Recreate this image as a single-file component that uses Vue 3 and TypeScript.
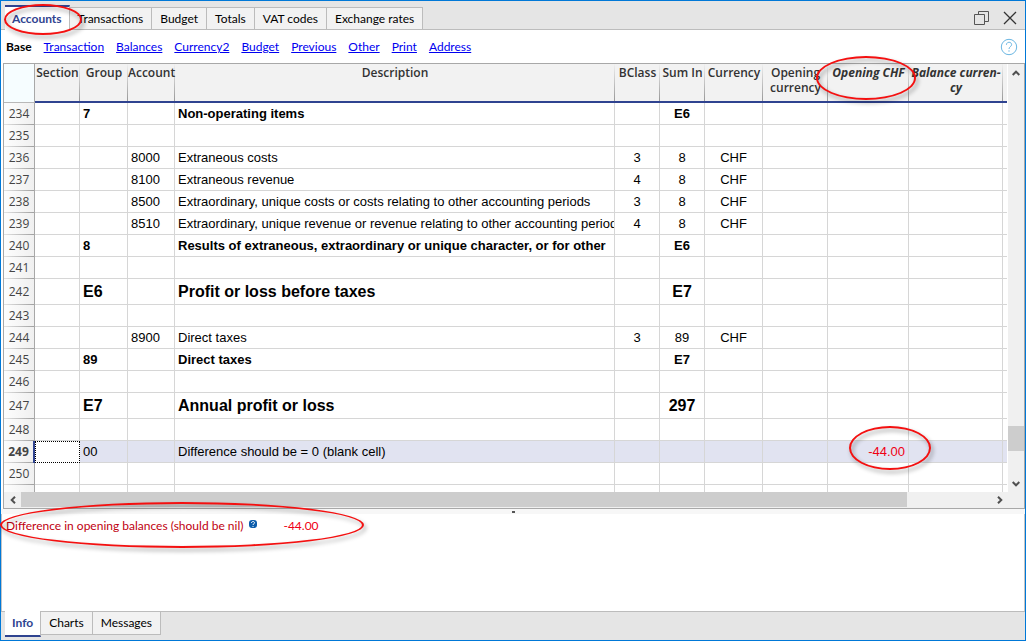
<script setup lang="ts">
import { ref } from 'vue'

interface Row {
  no?: number
  kind?: 'strong' | 'title' | 'selected'
  group?: string
  account?: string
  text?: string
  bclass?: string
  sumIn?: string
  currency?: string
  opening?: string
}

const tabs = ['Accounts', 'Transactions', 'Budget', 'Totals', 'VAT codes', 'Exchange rates']
const views = ['Transaction', 'Balances', 'Currency2', 'Budget', 'Previous', 'Other', 'Print', 'Address']
const infoTabs = ['Info', 'Charts', 'Messages']
const activeTab = ref('Accounts')
const activeInfo = ref('Info')

const rows: Row[] = [
  { no: 234, kind: 'strong', group: '7', text: 'Non-operating items', sumIn: 'E6' },
  { no: 235 },
  { no: 236, account: '8000', text: 'Extraneous costs', bclass: '3', sumIn: '8', currency: 'CHF' },
  { no: 237, account: '8100', text: 'Extraneous revenue', bclass: '4', sumIn: '8', currency: 'CHF' },
  { no: 238, account: '8500', text: 'Extraordinary, unique costs or costs relating to other accounting periods', bclass: '3', sumIn: '8', currency: 'CHF' },
  { no: 239, account: '8510', text: 'Extraordinary, unique revenue or revenue relating to other accounting periods', bclass: '4', sumIn: '8', currency: 'CHF' },
  { no: 240, kind: 'strong', group: '8', text: 'Results of extraneous, extraordinary or unique character, or for other', sumIn: 'E6' },
  { no: 241 },
  { no: 242, kind: 'title', group: 'E6', text: 'Profit or loss before taxes', sumIn: 'E7' },
  { no: 243 },
  { no: 244, account: '8900', text: 'Direct taxes', bclass: '3', sumIn: '89', currency: 'CHF' },
  { no: 245, kind: 'strong', group: '89', text: 'Direct taxes', sumIn: 'E7' },
  { no: 246 },
  { no: 247, kind: 'title', group: 'E7', text: 'Annual profit or loss', sumIn: '297' },
  { no: 248 },
  { no: 249, kind: 'selected', group: '00', text: 'Difference should be = 0 (blank cell)', opening: '-44.00' },
  { no: 250 },
  {},
]
</script>

<template>
  <main class="window">
    <header class="titlebar">
      <nav class="tabs">
        <button v-for="t in tabs" :key="t" type="button" class="tab" :class="{ active: t === activeTab }" @click="activeTab = t">{{ t }}</button>
      </nav>
      <div class="controls">
        <button type="button" class="icon" aria-label="Restore">
          <svg width="16" height="16" viewBox="0 0 16 16" fill="none" stroke="#555"><path d="M4.500 4V1.500H14.500V11.500H11M.5 4.500H10.500V14.500H.5Z" /></svg>
        </button>
        <button type="button" class="icon" aria-label="Close">
          <svg width="14" height="14" viewBox="0 0 14 14" fill="none" stroke="#333" stroke-width="1.300"><path d="M1 1L13 13M13 1L1 13" /></svg>
        </button>
      </div>
    </header>

    <nav class="views">
      <strong>Base</strong>
      <a v-for="v in views" :key="v" href="#">{{ v }}</a>
      <button type="button" class="icon help" aria-label="Help">
        <svg width="18" height="18" viewBox="0 0 18 18" fill="none" stroke="#6ab6e2"><circle cx="9" cy="9" r="7.700" /><path d="M6.400 6.800C6.400 3.400 11.600 3.500 11.600 6.600C11.600 8.600 9 8.800 9 11M9 12.300V13.700" /></svg>
      </button>
    </nav>

    <section class="grid">
      <div class="upper">
        <div class="viewport">
          <table>
            <colgroup>
              <col class="c-no" /><col class="c-section" /><col class="c-group" /><col class="c-account" /><col />
              <col class="c-class" /><col class="c-class" /><col class="c-currency" /><col class="c-opcur" /><col class="c-opchf" /><col class="c-balance" /><col class="c-rest" />
            </colgroup>
            <thead>
              <tr>
                <td class="corner"></td>
                <th>Section</th>
                <th>Group</th>
                <th>Account</th>
                <th>Description</th>
                <th>BClass</th>
                <th>Sum In</th>
                <th>Currency</th>
                <th>Opening<br />currency</th>
                <th class="italic">Opening CHF</th>
                <th class="italic">Balance curren-<br />cy</th>
                <td class="rest"></td>
              </tr>
            </thead>
            <tbody>
              <tr v-for="(r, i) in rows" :key="i" :class="r.kind">
                <th scope="row">{{ r.no }}</th>
                <td class="section"></td>
                <td>{{ r.group }}</td>
                <td>{{ r.account }}</td>
                <td>{{ r.text }}</td>
                <td class="mid">{{ r.bclass }}</td>
                <td class="mid">{{ r.sumIn }}</td>
                <td class="mid">{{ r.currency }}</td>
                <td></td>
                <td class="amount">{{ r.opening }}</td>
                <td></td>
                <td class="rest"></td>
              </tr>
            </tbody>
          </table>
        </div>
        <div class="vscroll">
          <button type="button" class="arrow" aria-label="Scroll up"><svg width="8" height="6" viewBox="0 0 8 6" fill="none" stroke="#505050" stroke-width="2"><path d="M.7 5L4 1.700L7.300 5" /></svg></button>
          <div class="vtrack"><div class="vthumb"></div></div>
          <button type="button" class="arrow" aria-label="Scroll down"><svg width="8" height="6" viewBox="0 0 8 6" fill="none" stroke="#505050" stroke-width="2"><path d="M.7 1L4 4.300L7.300 1" /></svg></button>
        </div>
      </div>
      <div class="hscroll">
        <button type="button" class="arrow" aria-label="Scroll left"><svg width="6" height="8" viewBox="0 0 6 8" fill="none" stroke="#505050" stroke-width="2"><path d="M5 .7L1.700 4L5 7.300" /></svg></button>
        <div class="htrack"><div class="hthumb"></div></div>
        <button type="button" class="arrow" aria-label="Scroll right"><svg width="6" height="8" viewBox="0 0 6 8" fill="none" stroke="#505050" stroke-width="2"><path d="M1 .7L4.300 4L1 7.300" /></svg></button>
      </div>
    </section>

    <div class="splitter"><span></span></div>

    <section class="info">
      <span>Difference in opening balances (should be nil)</span>
      <svg width="8" height="8" viewBox="0 0 8 8"><rect width="8" height="8" rx="3" fill="#0b5cab" /><path d="M2.500 3C2.500 1 5.500 1 5.500 2.800C5.500 4 4 3.700 4 5M4 6V7" fill="none" stroke="#fff" /></svg>
      <span class="diff">-44.00</span>
    </section>

    <footer class="tabs bottom">
      <button v-for="t in infoTabs" :key="t" type="button" class="tab" :class="{ active: t === activeInfo }" @click="activeInfo = t">{{ t }}</button>
    </footer>

    <div class="mark mark-tab"></div>
    <div class="mark mark-column"></div>
    <div class="mark mark-amount"></div>
    <div class="mark mark-info"></div>
  </main>
</template>

<style>
html, body { margin: 0; height: 100%; overflow: hidden; }
</style>

<style scoped>
* { box-sizing: border-box; }
.window {
  position: relative;
  display: flex;
  flex-direction: column;
  height: 100vh;
  border: 1px solid #0078d7;
  background: #fff;
  color: #000;
  font: 12px/16px Lato, "Open Sans", sans-serif;
}
button { font: inherit; color: inherit; margin: 0; padding: 0; border: 0; background: none; }
.titlebar {
  display: flex;
  justify-content: space-between;
  height: 29px;
  background: #e5e5e5;
  border-bottom: 1px solid #bcbcbc;
}
.tabs { display: flex; align-items: flex-end; padding-left: 4px; }
.tab {
  height: 22px;
  padding: 0 8px;
  background: #f2f2f2;
  border: 1px solid #bcbcbc;
  border-left-width: 0;
  border-bottom: 0;
  white-space: nowrap;
}
.tab.active {
  height: 25px;
  margin-bottom: -1px;
  padding: 0 7px;
  background: #fff;
  border-top: 2px solid #2f4390;
  color: #2f4390;
  font-weight: 700;
}
.controls { display: flex; align-items: center; gap: 13px; padding: 5px 8px 0 0; }
.icon { display: flex; }
.views { display: flex; align-items: center; gap: 12px; height: 33px; padding: 0 7px 0 5px; }
.views a { color: #0000f0; text-decoration: underline; }
.help { margin-left: auto; }
.grid {
  flex: 1;
  min-height: 0;
  display: flex;
  flex-direction: column;
  margin: 0 0 0 2px;
  border: 1px solid #a8a8a8;
}
.upper { flex: 1; min-height: 0; display: flex; }
.viewport { flex: 1; min-width: 0; overflow: hidden; }
table {
  width: 100%;
  table-layout: fixed;
  border-spacing: 0;
  font: 13px/16px "Liberation Sans", Arial, sans-serif;
}
.c-no { width: 31px; }
.c-section, .c-class { width: 45px; }
.c-group { width: 48px; }
.c-account { width: 47px; }
.c-currency { width: 58px; }
.c-opcur { width: 65px; }
.c-opchf { width: 81px; }
.c-balance { width: 94px; }
.c-rest { width: 4px; }
thead tr { height: 39px; }
thead th, thead .rest {
  padding: 1px 0 0;
  vertical-align: top;
  border-bottom: 2px solid #2f4390;
  background: linear-gradient(#f0f0f0, #989898) right / 1px 100% no-repeat, #f2f2f2;
  color: #333;
  font: 600 12px/15px "Open Sans", "Noto Sans", sans-serif;
  white-space: nowrap;
}
thead th.italic { font-style: italic; font-weight: 700; }
thead .rest { background: #f2f2f2; }
.corner { border-right: 1px solid #a8a8a8; border-bottom: 1px solid #b8b8b8; background: #f6fdff; }
tbody tr { height: 22px; }
tbody td {
  padding: 0 3px;
  border-right: 1px solid #d6d6d6;
  border-bottom: 1px solid #d6d6d6;
  overflow: hidden;
  white-space: nowrap;
}
tbody .rest { padding: 0; border-right: 0; }
tbody th {
  padding: 0;
  border-right: 1px solid #a8a8a8;
  background: linear-gradient(90deg, #e4e4e4, #a0a0a0) bottom / 100% 1px no-repeat, linear-gradient(90deg, #fdfdfd, #f0f0f0);
  color: #444;
  font: 12px/16px "Open Sans", "Noto Sans", sans-serif;
}
.mid { text-align: center; }
.amount { text-align: right; color: #f00014; }
.strong td { font-weight: 700; }
.title { height: 26px; }
.title td { font-size: 16px; line-height: 20px; font-weight: 700; }
.selected td { background: #e1e3f1; }
.selected th { font-weight: 700; border-right: 2px solid #2f4390; }
.selected .section { background: #fff; border: 1px dotted #000; }
.vscroll { display: flex; flex-direction: column; width: 17px; border-left: 1px solid #fff; background: #f0f0f0; }
.arrow { display: flex; flex: none; align-items: center; justify-content: center; width: 17px; height: 17px; }
.vscroll .arrow { width: 100%; }
.vtrack { flex: 1; display: flex; flex-direction: column; justify-content: flex-end; padding-bottom: 24px; }
.vthumb { height: 25px; background: #cdcdcd; }
.hscroll { display: flex; height: 16px; padding-right: 16px; background: #f0f0f0; }
.hscroll .arrow { height: 16px; }
.htrack { flex: 1; padding-right: 84px; }
.hthumb { height: 15px; background: #cdcdcd; }
.splitter { display: flex; align-items: center; justify-content: center; height: 5px; background: #f7f7f7; }
.splitter span { width: 3px; height: 2px; background: #555; }
.info {
  display: flex;
  align-items: flex-start;
  gap: 6px;
  height: 97px;
  padding: 4px;
  border: 1px solid #c4c4c4;
  border-top: 0;
  border-bottom: 0;
  color: #c00010;
}
.info svg { margin-top: 2px; }
.info .diff { margin-left: 20px; color: #f00014; }
.bottom {
  height: 29px;
  align-items: flex-start;
  border-top: 1px solid #bcbcbc;
  background: #e5e5e5;
}
.bottom .tab { height: 23px; border-top: 0; border-bottom: 1px solid #bcbcbc; }
.bottom .tab.active { margin-top: -1px; height: 26px; border-bottom: 2px solid #2f4390; }
.mark {
  position: absolute;
  border: 2px solid #f41010;
  border-radius: 50%;
  filter: drop-shadow(2px 3px 2px rgba(0, 0, 0, 0.4));
  pointer-events: none;
}
.mark-tab { left: 3px; top: 3px; width: 78px; height: 31px; }
.mark-column { right: 109px; top: 55px; width: 100px; height: 44px; }
.mark-amount { right: 94px; bottom: 170px; width: 82px; height: 44px; }
.mark-info { left: -1px; bottom: 92px; width: 364px; height: 46px; }
</style>
